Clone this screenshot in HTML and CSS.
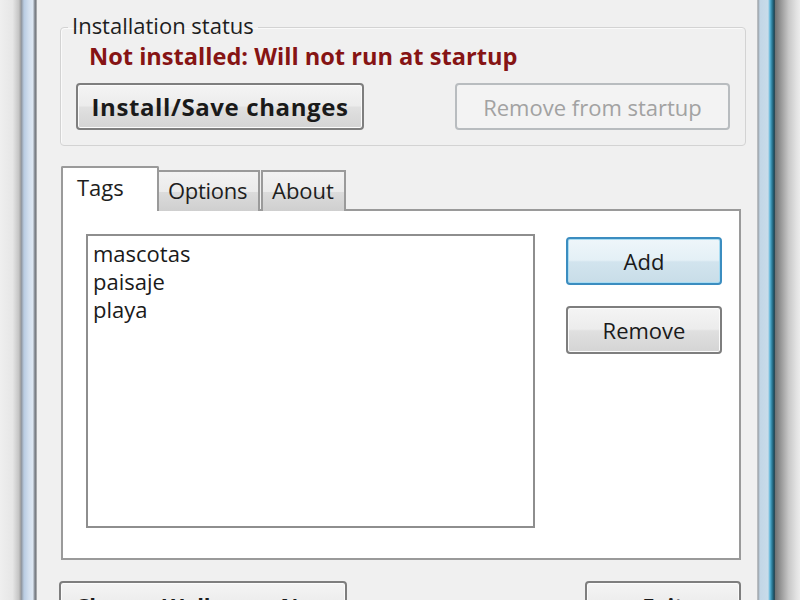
FILE: index.html
```html
<!DOCTYPE html>
<html>
<head>
<meta charset="utf-8">
<link rel="stylesheet" href="styles.css">
</head>
<body>
<div class="desktop">
  <div class="shadow-l"></div>
  <div class="frame-l"></div>
  <div class="client">
    <fieldset class="group">
      <legend>Installation status</legend>
      <div class="status">Not installed: Will not run at startup</div>
      <div class="group-buttons">
        <button class="btn btn-bold btn-install">Install/Save changes</button>
        <button class="btn btn-disabled btn-remove-startup">Remove from startup</button>
      </div>
    </fieldset>
    <div class="tabs">
      <div class="tab-strip">
        <div class="tab tab-active tab-tags">Tags</div>
        <div class="tab tab-options">Options</div>
        <div class="tab tab-about">About</div>
      </div>
      <div class="tab-panel">
        <div class="listbox">
          <div class="item">mascotas</div>
          <div class="item">paisaje</div>
          <div class="item">playa</div>
        </div>
        <div class="side-buttons">
          <button class="btn btn-focus btn-side">Add</button>
          <button class="btn btn-side">Remove</button>
        </div>
      </div>
    </div>
    <div class="bottom-buttons">
      <button class="btn btn-bold btn-wallpaper">Change Wallpaper Now</button>
      <button class="btn btn-bold btn-exit">Exit</button>
    </div>
  </div>
  <div class="frame-r"></div>
  <div class="shadow-r"></div>
</div>
</body>
</html>
```
FILE: styles.css
```css
* { box-sizing: border-box; }
html, body { margin: 0; padding: 0; }
body {
  width: 800px;
  height: 600px;
  overflow: hidden;
  font-family: "Open Sans", "Noto Sans", "Liberation Sans", sans-serif;
  font-size: 22px;
  color: #1a1a1a;
}
.desktop {
  display: flex;
  height: 600px;
  background: #ececec;
}
.shadow-l {
  width: 21px;
  background: linear-gradient(to right, #efefef 0%, #e6e6e6 60%, #c4c4c4 90%, #9a9a9a 100%);
}
.frame-l {
  width: 16px;
  background: linear-gradient(to right, #8b9097 0px, #b9cce2 3px, #d3e0ef 8px, #dde7f2 12px, #9aa1aa 13px, #6f7378 15px, #dcdcdc 16px);
}
.frame-r {
  width: 18px;
  background: linear-gradient(to right, #d8d8d8 0px, #9aa0a6 1px, #c2d6e6 3px, #c8dcea 11px, #58b4d8 13px, #2c7c98 15px, #1b4c5e 17px, #3a4a52 18px);
}
.shadow-r {
  width: 25px;
  background: linear-gradient(to right, #6e7071 0%, #9a9a9a 25%, #c8c8c8 55%, #e2e2e2 85%, #ececec 100%);
}
.client {
  width: 720px;
  background: #f0f0f0;
  padding: 13px 11px 0 23px;
  display: flex;
  flex-direction: column;
}
.group {
  margin: 0;
  padding: 0 15px 15px 15px;
  border: 1px solid #d3d3d3;
  border-radius: 4px;
  box-shadow: inset 1px 1px 0 #fafafa;
  min-width: 0;
}
.group legend {
  margin-left: -8px;
  padding: 0 4px 4px 4px;
  line-height: 24px;
  color: #1e1e1e;
}
.status {
  padding-left: 13px;
  line-height: 30px;
  font-size: 23.6px;
  font-weight: 700;
  color: #861414;
}
.group-buttons {
  margin-top: 12px;
  display: flex;
  justify-content: space-between;
}
.btn {
  font-family: inherit;
  font-size: 22px;
  color: #1a1a1a;
  height: 47px;
  padding: 0;
  border: 2px solid #7e7e7e;
  border-radius: 4px;
  background: linear-gradient(to bottom, #f4f4f4 0%, #ececec 48%, #e0e0e0 52%, #d4d4d4 100%);
  box-shadow: inset 0 0 0 1px #fbfbfb;
}
.btn-bold { font-weight: 700; }
.btn-install {
  width: 288px;
  font-size: 24px;
  letter-spacing: 0.6px;
}
.btn-remove-startup {
  width: 275px;
  color: #a2a2a2;
  border-color: #b8bcbf;
  background: #f3f3f3;
  box-shadow: none;
}
.tabs {
  margin-top: 20px;
  margin-right: 5px;
  margin-left: 1px;
}
.tab-strip {
  display: flex;
  align-items: flex-end;
  height: 45px;
  margin-bottom: -2px;
}
.tab {
  height: 41px;
  border: 2px solid #9a9a9a;
  border-bottom: none;
  background: linear-gradient(to bottom, #f2f2f2 0%, #ebebeb 50%, #dcdcdc 51%, #cfcfcf 100%);
  padding: 0 9px;
  line-height: 37px;
  color: #1e1e1e;
}
.tab-active {
  position: relative;
  z-index: 1;
  height: 45px;
  background: #ffffff;
  line-height: 38px;
  padding: 0 14px;
  border-radius: 2px 2px 0 0;
}
.tab-tags { width: 98px; }
.tab-options { width: 102px; margin-left: -1px; border-left-width: 1px; letter-spacing: -0.3px; }
.tab-about { width: 85px; margin-left: 1px; }
.tab-panel {
  height: 351px;
  border: 2px solid #9a9a9a;
  background: #ffffff;
  padding: 23px 17px 30px 23px;
  display: flex;
}
.listbox {
  width: 449px;
  height: 294px;
  border: 2px solid #8e8e8e;
  background: #ffffff;
  padding: 3px 5px;
}
.item {
  line-height: 28px;
  color: #1a1a1a;
}
.side-buttons {
  margin-left: 31px;
  padding-top: 3px;
  display: flex;
  flex-direction: column;
  gap: 21px;
}
.btn-side {
  width: 156px;
  height: 48px;
}
.btn-focus {
  border-color: #3b8dc0;
  background: linear-gradient(to bottom, #eef6fa 0%, #e4f0f6 48%, #d2e4ee 52%, #c8dde8 100%);
  box-shadow: inset 0 0 0 1px #a8dcf2;
}
.bottom-buttons {
  margin-top: 21px;
  display: flex;
  justify-content: space-between;
  padding-right: 5px;
  margin-left: -1px;
}
.btn-wallpaper { width: 288px; }
.btn-exit { width: 156px; }
```
